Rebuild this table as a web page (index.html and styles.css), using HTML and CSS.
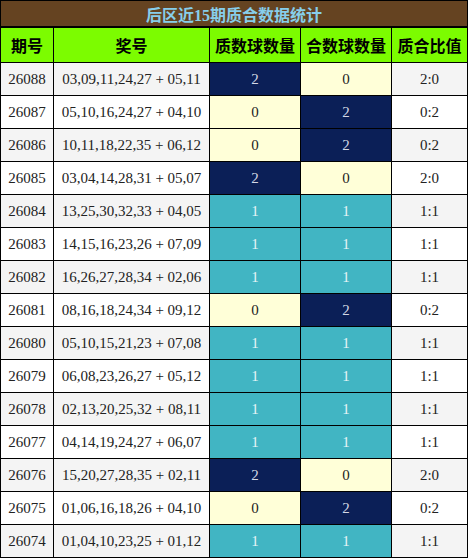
FILE: index.html
```html
<!DOCTYPE html>
<html>
<head>
    <title>后区近15期质合数据统计</title>
    <link rel="stylesheet" href="styles.css">
</head>
<body>
<table class="stats">
    <colgroup>
        <col class="c-issue">
        <col class="c-nums">
        <col class="c-prime">
        <col class="c-comp">
        <col class="c-ratio">
    </colgroup>
    <thead>
        <tr><th colspan="5" class="title">后区近15期质合数据统计</th></tr>
        <tr class="head">
            <th>期号</th>
            <th>奖号</th>
            <th>质数球数量</th>
            <th>合数球数量</th>
            <th>质合比值</th>
        </tr>
    </thead>
    <tbody>
        <tr><td>26088</td><td>03,09,11,24,27 + 05,11</td><td class="two">2</td><td class="zero">0</td><td>2:0</td></tr>
        <tr><td>26087</td><td>05,10,16,24,27 + 04,10</td><td class="zero">0</td><td class="two">2</td><td>0:2</td></tr>
        <tr><td>26086</td><td>10,11,18,22,35 + 06,12</td><td class="zero">0</td><td class="two">2</td><td>0:2</td></tr>
        <tr><td>26085</td><td>03,04,14,28,31 + 05,07</td><td class="two">2</td><td class="zero">0</td><td>2:0</td></tr>
        <tr><td>26084</td><td>13,25,30,32,33 + 04,05</td><td class="one">1</td><td class="one">1</td><td>1:1</td></tr>
        <tr><td>26083</td><td>14,15,16,23,26 + 07,09</td><td class="one">1</td><td class="one">1</td><td>1:1</td></tr>
        <tr><td>26082</td><td>16,26,27,28,34 + 02,06</td><td class="one">1</td><td class="one">1</td><td>1:1</td></tr>
        <tr><td>26081</td><td>08,16,18,24,34 + 09,12</td><td class="zero">0</td><td class="two">2</td><td>0:2</td></tr>
        <tr><td>26080</td><td>05,10,15,21,23 + 07,08</td><td class="one">1</td><td class="one">1</td><td>1:1</td></tr>
        <tr><td>26079</td><td>06,08,23,26,27 + 05,12</td><td class="one">1</td><td class="one">1</td><td>1:1</td></tr>
        <tr><td>26078</td><td>02,13,20,25,32 + 08,11</td><td class="one">1</td><td class="one">1</td><td>1:1</td></tr>
        <tr><td>26077</td><td>04,14,19,24,27 + 06,07</td><td class="one">1</td><td class="one">1</td><td>1:1</td></tr>
        <tr><td>26076</td><td>15,20,27,28,35 + 02,11</td><td class="two">2</td><td class="zero">0</td><td>2:0</td></tr>
        <tr><td>26075</td><td>01,06,16,18,26 + 04,10</td><td class="zero">0</td><td class="two">2</td><td>0:2</td></tr>
        <tr><td>26074</td><td>01,04,10,23,25 + 01,12</td><td class="one">1</td><td class="one">1</td><td>1:1</td></tr>
    </tbody>
</table>
</body>
</html>
```

FILE: styles.css
```css
body {
    margin: 0;
    background: #fff;
    font-family: "Liberation Serif", "Noto Sans CJK SC", serif;
}

.stats {
    width: 467px;
    border-collapse: collapse;
    table-layout: fixed;
    color: #222;
}

.c-issue { width: 53px; }
.c-nums  { width: 156px; }
.c-prime { width: 91px; }
.c-comp  { width: 91px; }
.c-ratio { width: 76px; }

.stats th,
.stats td {
    border: 1px solid #000;
    padding: 0;
    text-align: center;
}

.title {
    height: 25px;
    background: #654321;
    color: #87ceeb;
    font-size: 16px;
    font-weight: bold;
    border-bottom-width: 2px !important;
}

.head th {
    height: 34px;
    background: #7cfc00;
    color: #000;
    font-size: 16px;
    font-weight: bold;
}

.stats td {
    height: 32px;
    font-size: 15px;
}

.stats tbody tr:nth-child(odd) td {
    background: #f4f4f4;
}

.stats tbody tr:nth-child(even) td {
    background: #fff;
}

/* count cells coloured by value */
.stats tbody tr td.two {
    background: #0b1f57;
    color: #d4d8e6;
}

.stats tbody tr td.zero {
    background: #ffffd8;
    color: #222;
}

.stats tbody tr td.one {
    background: #41b5c3;
    color: #e6f4f6;
}
```
